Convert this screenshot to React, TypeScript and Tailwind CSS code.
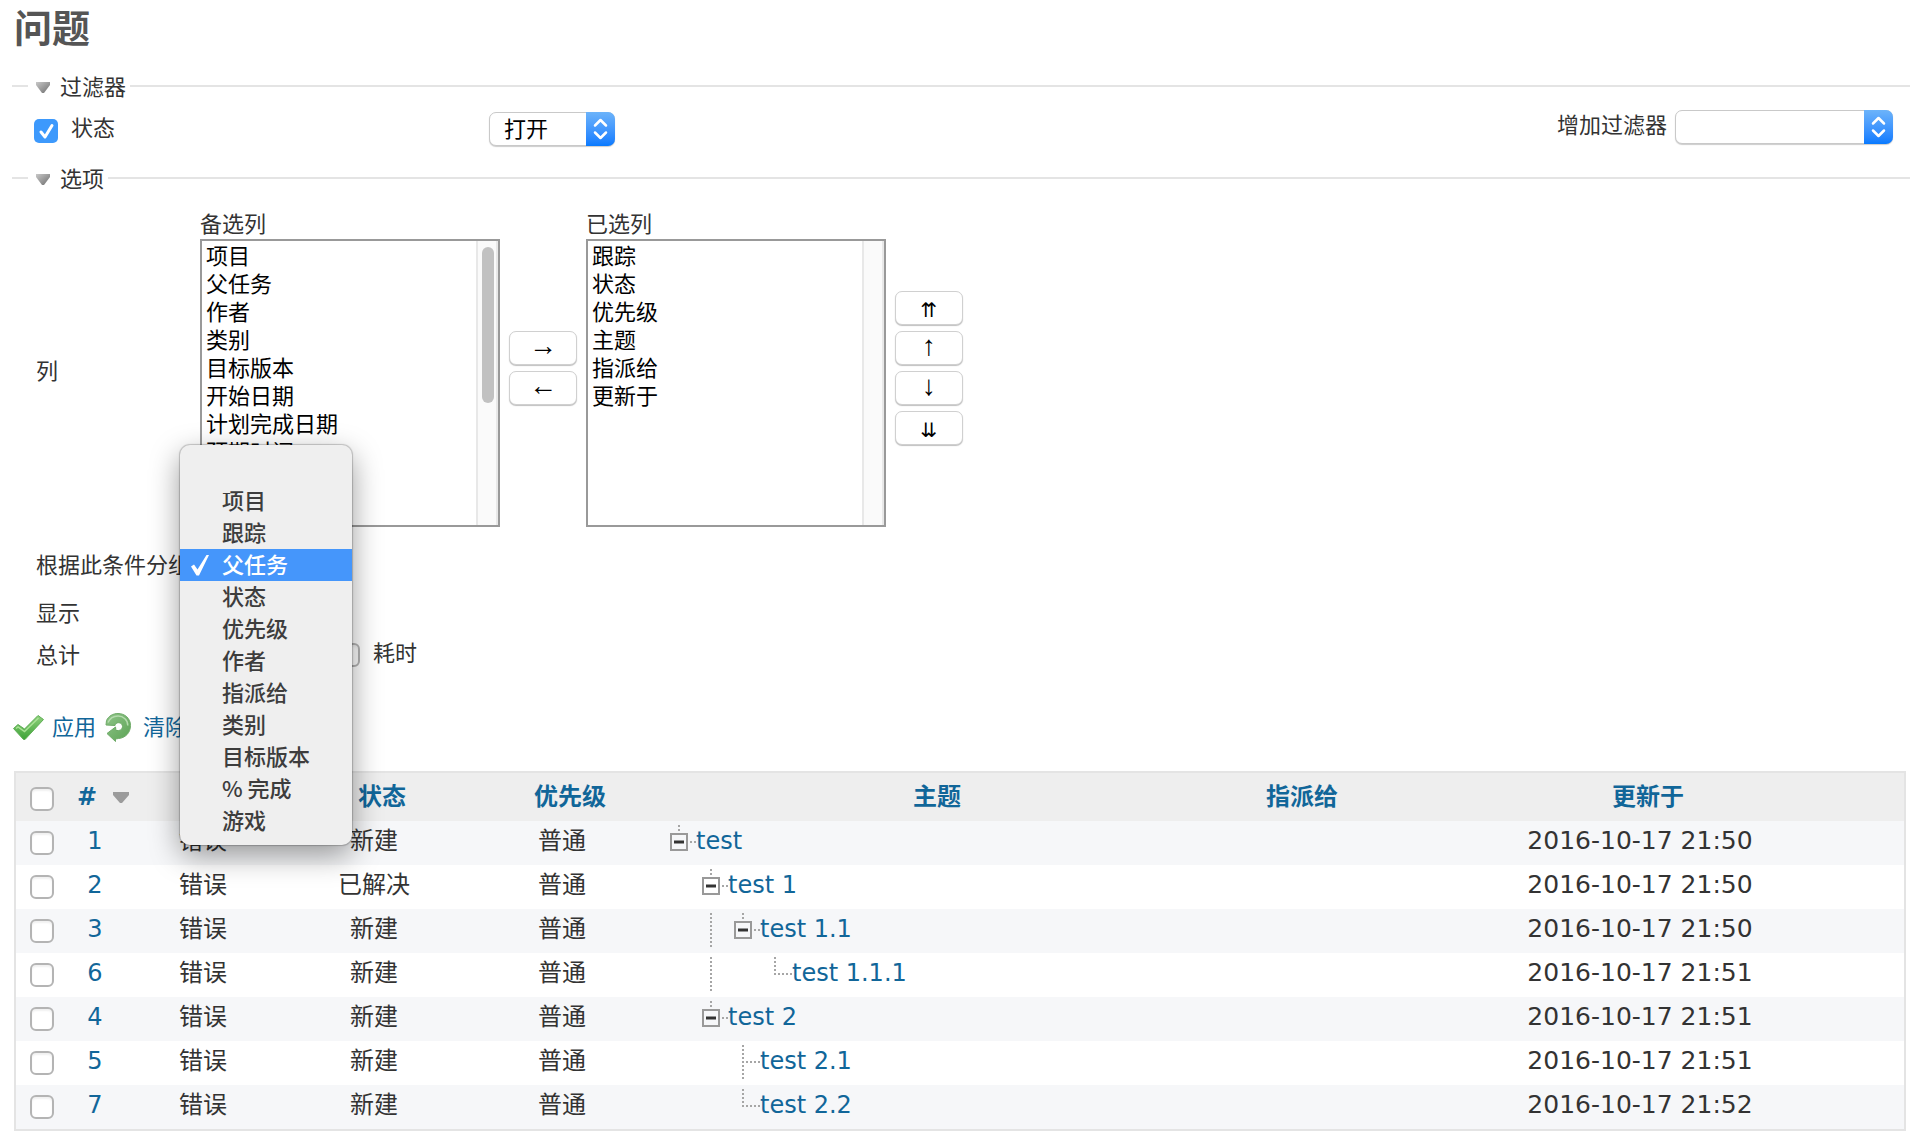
import React from "react";

const LATIN_CJK = "font-['DejaVu_Sans','Noto_Sans_CJK_SC',sans-serif]";

type TreePart = "blank" | "line" | "node" | "tee" | "end";

interface Issue {
  id: number;
  status: string;
  tree: TreePart[];
  subject: string;
  updated: string;
}

const issues: Issue[] = [
  { id: 1, status: "新建", tree: ["node"], subject: "test", updated: "2016-10-17 21:50" },
  { id: 2, status: "已解决", tree: ["blank", "node"], subject: "test 1", updated: "2016-10-17 21:50" },
  { id: 3, status: "新建", tree: ["blank", "line", "node"], subject: "test 1.1", updated: "2016-10-17 21:50" },
  { id: 6, status: "新建", tree: ["blank", "line", "blank", "end"], subject: "test 1.1.1", updated: "2016-10-17 21:51" },
  { id: 4, status: "新建", tree: ["blank", "node"], subject: "test 2", updated: "2016-10-17 21:51" },
  { id: 5, status: "新建", tree: ["blank", "blank", "tee"], subject: "test 2.1", updated: "2016-10-17 21:51" },
  { id: 7, status: "新建", tree: ["blank", "blank", "end"], subject: "test 2.2", updated: "2016-10-17 21:52" },
];

const availableColumns = ["项目", "父任务", "作者", "类别", "目标版本", "开始日期", "计划完成日期", "预期时间"];
const selectedColumns = ["跟踪", "状态", "优先级", "主题", "指派给", "更新于"];
const groupOptions = ["", "项目", "跟踪", "父任务", "状态", "优先级", "作者", "指派给", "类别", "目标版本", "% 完成", "游戏"];

function Triangle() {
  return (
    <svg width="14" height="11" viewBox="0 0 14 11" aria-hidden="true">
      <defs>
        <linearGradient id="tri" x1="0" y1="0" x2="1" y2="1">
          <stop offset="0" stopColor="#c8c8c8" />
          <stop offset="1" stopColor="#6e6e6e" />
        </linearGradient>
      </defs>
      <path d="M0 0h14v3L8 11H6L0 3z" fill="url(#tri)" />
    </svg>
  );
}

function Legend({ children }: { children: React.ReactNode }) {
  return (
    <legend className="ml-4 pl-2 pr-1">
      <button type="button" className="flex h-[26px] items-center gap-[10px] pt-[3px] leading-[23px]">
        <Triangle />
        {children}
      </button>
    </legend>
  );
}

function MacSelect({ id, label, options, width }: { id: string; label?: string; options: string[]; width: string }) {
  return (
    <div className={`relative h-[34px] ${width}`}>
      <select
        id={id}
        aria-label={label}
        className="h-full w-full appearance-none rounded-[7px] border border-[#c9c9c9] bg-white pl-[14px] pr-8 text-black shadow-[0_1px_1px_rgba(0,0,0,0.2)]"
      >
        {options.map((o) => (
          <option key={o}>{o}</option>
        ))}
      </select>
      <span className="pointer-events-none absolute inset-y-0 right-0 flex w-[29px] items-center justify-center rounded-r-[7px] bg-linear-to-b from-[#6cb3fa] to-[#067aff]">
        <svg width="15" height="22" viewBox="0 0 15 22" fill="none" stroke="white" strokeWidth="2.500" strokeLinecap="round" strokeLinejoin="round" aria-hidden="true">
          <path d="M2 7.500l5.500-5.500 5.500 5.500M2 14.500l5.500 5.500 5.500-5.500" />
        </svg>
      </span>
    </div>
  );
}

function Checkbox({ label, id }: { label?: string; id?: string }) {
  return (
    <input
      type="checkbox"
      id={id}
      aria-label={label}
      className="block size-6 appearance-none rounded-md border-2 border-[#b4b4b4] bg-white shadow-[inset_0_2px_2px_rgba(0,0,0,0.06)]"
    />
  );
}

function ColumnList({ id, label, items, thumb }: { id: string; label: string; items: string[]; thumb?: boolean }) {
  return (
    <div className="w-[300px]">
      <label htmlFor={id} className="block h-7 leading-7">
        {label}
      </label>
      <div className="flex h-72 overflow-hidden border-2 border-[#999] bg-white">
        <select id={id} multiple className="-mt-[3px] min-w-0 flex-1 overflow-y-auto p-0 text-black outline-none [scrollbar-width:none]">
          {items.map((o) => (
            <option key={o} className="h-7 p-0 pl-1">
              {o}
            </option>
          ))}
        </select>
        <div className="w-[22px] border-x-2 border-[#e8e8e8] bg-[#fafafa] pl-1 pr-[2px] pt-[6px]">
          {thumb && <div className="h-[156px] rounded-full bg-[#c1c1c1]" />}
        </div>
      </div>
    </div>
  );
}

function ArrowButton({ children, label, double }: { children: string; label: string; double?: boolean }) {
  return (
    <button
      type="button"
      aria-label={label}
      className="flex h-[34px] w-[68px] items-center justify-center rounded-[7px] border border-[#d0d0d0] bg-white font-['Liberation_Sans','DejaVu_Sans',sans-serif] leading-8 text-black shadow-[0_1px_1px_rgba(0,0,0,0.25)]"
    >
      <span className={double ? "pt-1 text-xl" : "pb-1 text-[28px]"}>{children}</span>
    </button>
  );
}

function TreeCell({ part }: { part: TreePart }) {
  return (
    <svg width="32" height="36" viewBox="0 0 32 36" fill="none" stroke="#a6a6a6" strokeWidth="2" strokeDasharray="2 2" className="shrink-0" aria-hidden="true">
      {(part === "line" || part === "tee") && <path d="M15 0v36" />}
      {part === "end" && <path d="M15 0v18" />}
      {(part === "tee" || part === "end") && <path d="M18 17h14" />}
      {part === "node" && (
        <>
          <path d="M15 0v7M26 17h6" />
          <rect x="7" y="9" width="16" height="16" stroke="#999" strokeDasharray="none" />
          <path d="M10 17h10" stroke="#333" strokeWidth="3" strokeDasharray="none" />
        </>
      )}
    </svg>
  );
}

function ApplyIcon() {
  return (
    <svg width="32" height="28" viewBox="0 0 32 28" aria-hidden="true">
      <defs>
        <linearGradient id="chk" x1="0" y1="0" x2="0" y2="1">
          <stop offset="0" stopColor="#8ed07c" />
          <stop offset="1" stopColor="#3fa338" />
        </linearGradient>
      </defs>
      <path d="M1.500 15.500L6 11.500l6.500 4.500L26 2.500l5.500 4L13 26.500h-1.500z" fill="url(#chk)" stroke="#5fae55" strokeWidth="1" strokeLinejoin="round" />
      <path d="M4 15.500l2-1.500 6.500 4.500L26.500 5" fill="none" stroke="#a9e295" strokeWidth="1.500" />
    </svg>
  );
}

function ClearIcon() {
  return (
    <svg width="28" height="30" viewBox="0 0 28 30" aria-hidden="true">
      <defs>
        <linearGradient id="rel" x1="0" y1="0" x2="1" y2="1">
          <stop offset="0" stopColor="#8fc488" />
          <stop offset="1" stopColor="#5ba354" />
        </linearGradient>
      </defs>
      <path
        d="M2 13L2.500 8.500C4.500 4 9 1.500 14 1.500c7 0 12.500 5 12.500 12S21.500 26 14.500 26.500L11.500 27v2.500L3 21.500l8.500-6.500.5 3.500h2.500c2.500 0 4-1.800 4-4 0-2.300-1.700-3.800-3.800-3.800-2.200 0-3.200 1-3.700 2.800z"
        fill="url(#rel)"
        stroke="#6fab68"
        strokeWidth="1"
        strokeLinejoin="round"
      />
      <path d="M4 10.500C6 6 10 4 14 4c5.500 0 9.800 4 9.800 9.500" fill="none" stroke="#b5dbae" strokeWidth="1.500" />
    </svg>
  );
}

function GroupMenu() {
  return (
    <ul
      role="listbox"
      aria-label="根据此条件分组"
      className="absolute -left-5 -top-[98px] z-10 w-[172px] rounded-[10px] bg-[#efefef] py-2 font-['Noto_Sans_CJK_SC',sans-serif] font-medium text-[#3d3d3d] shadow-[0_0_1px_1px_rgba(0,0,0,0.2),0_10px_30px_rgba(0,0,0,0.4)]"
    >
      {groupOptions.map((o) => {
        const selected = o === "父任务";
        return (
          <li
            key={o}
            role="option"
            aria-selected={selected}
            className={selected ? "flex h-8 bg-[#4596fb] leading-7 text-white" : "flex h-8 leading-7"}
          >
            <span className="flex h-8 w-[42px] shrink-0 items-center pl-[11px]">
              {selected && (
                <svg width="18" height="22" viewBox="0 0 18 22" aria-hidden="true">
                  <path d="M0 12.500l3-2 3.500 5L15.500 1H18L8 21.500H5.500z" fill="white" />
                </svg>
              )}
            </span>
            {o}
          </li>
        );
      })}
    </ul>
  );
}

const headers = ["状态", "优先级", "主题", "指派给", "更新于"];

export default function App() {
  return (
    <main className={`${LATIN_CJK} min-h-screen bg-white pl-3 pr-[19px] text-[22px] text-[#333]`}>
      <h1 className="h-[73px] pl-[2px] pt-px text-[38px] font-bold leading-[56px] text-[#555]">问题</h1>

      <fieldset className="border-t-2 border-[#e4e4e4]">
        <Legend>过滤器</Legend>
        <div className="flex h-[66px] items-start justify-between pl-[22px] pr-[17px]">
          <div className="flex items-center pt-[13px]">
            <div className="flex w-[455px] items-center gap-[13px]">
              <span className="relative mt-1 block size-6">
                <input id="f-status" type="checkbox" defaultChecked className="block size-6 appearance-none rounded-[5px] bg-[#3d99fc]" />
                <svg className="pointer-events-none absolute inset-0" width="24" height="24" viewBox="0 0 24 24" fill="none" stroke="white" strokeWidth="3" strokeLinecap="round" strokeLinejoin="round" aria-hidden="true">
                  <path d="M7 13l4 5L18 6.500" />
                </svg>
              </span>
              <label htmlFor="f-status" className="leading-8">
                状态
              </label>
            </div>
            <MacSelect id="op-status" label="状态" options={["打开"]} width="w-[126px]" />
          </div>
          <div className="flex items-center gap-2 pt-[11px]">
            <label htmlFor="add-filter" className="pb-[2px] leading-[30px]">
              增加过滤器
            </label>
            <MacSelect id="add-filter" options={[""]} width="w-[218px]" />
          </div>
        </div>
      </fieldset>

      <fieldset className="border-t-2 border-[#e4e4e4]">
        <Legend>选项</Legend>
        <div className="pl-6 pt-5">
          <div className="flex items-center">
            <div className="w-[164px] pt-1">列</div>
            <div className="flex items-center gap-[9px]">
              <ColumnList id="available" label="备选列" items={availableColumns} thumb />
              <div className="flex flex-col gap-[6px] pb-[2px]">
                <ArrowButton label="添加">→</ArrowButton>
                <ArrowButton label="移除">←</ArrowButton>
              </div>
              <ColumnList id="selected" label="已选列" items={selectedColumns} />
              <div className="flex flex-col gap-[6px] pb-[2px]">
                <ArrowButton label="置顶" double>⇈</ArrowButton>
                <ArrowButton label="上移">↑</ArrowButton>
                <ArrowButton label="下移">↓</ArrowButton>
                <ArrowButton label="置底" double>⇊</ArrowButton>
              </div>
            </div>
          </div>
          <div className="mt-4 flex h-11 items-center">
            <div className="w-[164px] whitespace-nowrap">根据此条件分组</div>
            <div className="relative h-full flex-1">
              <GroupMenu />
            </div>
          </div>
          <div className="flex h-[52px] items-center">显示</div>
          <div className="flex h-8 items-center">
            <div className="w-[300px]">总计</div>
            <Checkbox id="total-spent" />
            <label htmlFor="total-spent" className="pb-1 pl-[13px]">
              耗时
            </label>
          </div>
        </div>
      </fieldset>

      <div className="mt-9 flex h-10 items-center text-[#169]">
        <a href="#apply" className="flex items-center gap-2">
          <ApplyIcon />
          应用
        </a>
        <a href="#clear" className="ml-2 flex items-center gap-[11px]">
          <ClearIcon />
          清除
        </a>
      </div>

      <div className="ml-[2px] mr-1 mt-6 border-2 border-[#e4e4e4]">
        <table className="w-full table-fixed border-collapse text-2xl">
          <colgroup>
            <col className="w-[54px]" />
            <col className="w-[66px]" />
            <col className="w-[150px]" />
            <col className="w-[192px]" />
            <col className="w-[184px]" />
            <col />
            <col className="w-[180px]" />
            <col className="w-[512px]" />
          </colgroup>
          <thead>
            <tr className="h-12 bg-[#eee] leading-8 text-[#169]">
              <th className="p-0 pl-[14px] pt-1">
                <Checkbox label="全选" />
              </th>
              <th className="p-0">
                <a href="#sort-id" className="flex items-center justify-center gap-4">
                  #
                  <svg width="16" height="11" viewBox="0 0 16 11" aria-hidden="true">
                    <path d="M0 0h16v3L9 11H7L0 3z" fill="#9b9b9b" />
                  </svg>
                </a>
              </th>
              <th className="p-0" aria-label="跟踪" />
              {headers.map((h) => (
                <th key={h} className="p-0 font-bold">
                  <a href="#sort">{h}</a>
                </th>
              ))}
            </tr>
          </thead>
          <tbody className="text-center">
            {issues.map((it) => (
              <tr key={it.id} className="h-11 leading-10 odd:bg-[#f6f7f9]">
                <td className="p-0 pl-[14px]">
                  <Checkbox label={`问题 ${it.id}`} />
                </td>
                <td className="p-0 pb-1 pr-4 text-[#169]">
                  <a href="#issue">{it.id}</a>
                </td>
                <td className="p-0 pb-1 pr-4">错误</td>
                <td className="p-0 pb-1 pr-4">{it.status}</td>
                <td className="p-0 pb-1 pr-4">普通</td>
                <td className="p-0 pl-[2px] text-left">
                  <div className="flex h-11 pt-1">
                    {it.tree.map((part, i) => (
                      <TreeCell key={i} part={part} />
                    ))}
                    <a href="#issue" className="leading-8 text-[#169]">
                      {it.subject}
                    </a>
                  </div>
                </td>
                <td className="p-0" />
                <td className="p-0 pb-1 pr-4 text-[25px]">{it.updated}</td>
              </tr>
            ))}
          </tbody>
        </table>
      </div>
    </main>
  );
}
